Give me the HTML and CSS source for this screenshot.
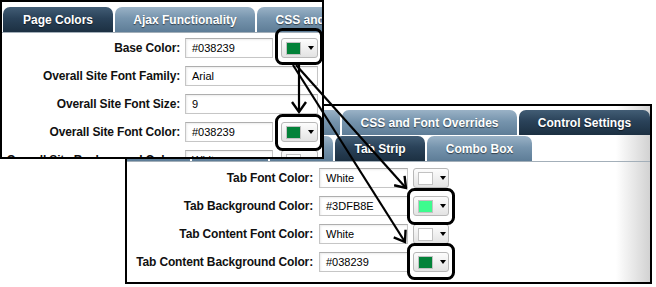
FILE: index.html
```html
<!DOCTYPE html>
<html lang="en">
<head>
  <meta charset="UTF-8">
  <meta name="viewport" content="width=device-width, initial-scale=1.0">
  <title>Tab Strip Colors</title>
  <link rel="stylesheet" href="styles.css">
</head>
<body>
  <div class="stage">

    <!-- back window: control settings -->
    <div class="shot shot-back">
      <div class="tabs">
        <div class="tab-row">
          <span class="tab tab-light tab-ajax2">Ajax Functionality</span>
          <span class="tab tab-light tab-css2">CSS and Font Overrides</span>
          <span class="tab tab-dark tab-control">Control Settings</span>
        </div>
        <div class="tab-row">
          <span class="tab tab-light tab-grid">Grid</span>
          <span class="tab tab-light tab-menu">Menu</span>
          <span class="tab tab-light tab-tree">Tree</span>
          <span class="tab tab-dark tab-strip">Tab Strip</span>
          <span class="tab tab-light tab-combo">Combo Box</span>
        </div>
      </div>

      <div class="form">
        <div class="row">
          <div class="label"><span>Tab Font Color:</span></div>
          <div class="field">
            <div class="input">White</div>
            <div class="picker"><span class="swatch swatch-white"></span><span class="caret"></span></div>
          </div>
        </div>
        <div class="row">
          <div class="label"><span>Tab Background Color:</span></div>
          <div class="field">
            <div class="input">#3DFB8E</div>
            <div class="picker"><span class="swatch swatch-mint"></span><span class="caret"></span></div>
          </div>
        </div>
        <div class="row">
          <div class="label"><span>Tab Content Font Color:</span></div>
          <div class="field">
            <div class="input">White</div>
            <div class="picker"><span class="swatch swatch-white"></span><span class="caret"></span></div>
          </div>
        </div>
        <div class="row">
          <div class="label"><span>Tab Content Background Color:</span></div>
          <div class="field">
            <div class="input">#038239</div>
            <div class="picker"><span class="swatch swatch-green"></span><span class="caret"></span></div>
          </div>
        </div>
      </div>
    </div>

    <!-- front window: page colors -->
    <div class="shot shot-front">
      <div class="tabs">
        <div class="tab-row">
          <span class="tab tab-dark tab-page">Page Colors</span>
          <span class="tab tab-light tab-ajax">Ajax Functionality</span>
          <span class="tab tab-light tab-css">CSS and Font Overrides</span>
        </div>
      </div>

      <div class="form">
        <div class="row">
          <div class="label"><span>Base Color:</span></div>
          <div class="field">
            <div class="input">#038239</div>
            <div class="picker"><span class="swatch swatch-green"></span><span class="caret"></span></div>
          </div>
        </div>
        <div class="row">
          <div class="label"><span>Overall Site Font Family:</span></div>
          <div class="field">
            <div class="input input-wide">Arial</div>
          </div>
        </div>
        <div class="row">
          <div class="label"><span>Overall Site Font Size:</span></div>
          <div class="field">
            <div class="input input-wide">9</div>
          </div>
        </div>
        <div class="row">
          <div class="label"><span>Overall Site Font Color:</span></div>
          <div class="field">
            <div class="input">#038239</div>
            <div class="picker"><span class="swatch swatch-green"></span><span class="caret"></span></div>
          </div>
        </div>
        <div class="row">
          <div class="label"><span>Overall Site Background Color:</span></div>
          <div class="field">
            <div class="input">White</div>
            <div class="picker"><span class="swatch swatch-white"></span><span class="caret"></span></div>
          </div>
        </div>
      </div>
    </div>

    <!-- callouts and arrows drawn over both windows -->
    <svg class="notes" width="656" height="287" viewBox="0 0 656 287">
      <defs>
        <marker id="head" markerWidth="14" markerHeight="16" refX="11" refY="8" orient="auto" markerUnits="userSpaceOnUse">
          <path d="M1,1 L11,8 L1,15" fill="none" stroke="#000" stroke-width="2.4"/>
        </marker>
      </defs>
      <g fill="none" stroke="#000" stroke-width="3">
        <rect x="276.5" y="29.5" width="45" height="34" rx="6"/>
        <rect x="276.5" y="115.5" width="45" height="34" rx="6"/>
        <rect x="408.5" y="189.5" width="45" height="34" rx="6"/>
        <rect x="408.5" y="244.5" width="45" height="34" rx="6"/>
      </g>
      <g stroke="#000" stroke-width="2.2" marker-end="url(#head)">
        <line x1="299" y1="65" x2="299" y2="112"/>
        <line x1="296" y1="65" x2="406" y2="188"/>
        <line x1="293" y1="65" x2="405" y2="242"/>
      </g>
    </svg>
  </div>
</body>
</html>
```

FILE: styles.css
```css
* {
  box-sizing: border-box;
}

body {
  margin: 0;
  background: #fff;
  font-family: "Liberation Sans", Arial, sans-serif;
}

.stage {
  position: relative;
  width: 656px;
  height: 287px;
  overflow: hidden;
}

/**
 * Screenshot windows
 */
.shot {
  position: absolute;
  border: 2px solid #000;
  background: #fff;
  overflow: hidden;
}

.shot-front {
  left: 0;
  top: 0;
  width: 324px;
  height: 159px;
  z-index: 2;

  --label: 178px;
  --gap: 5px;
  --input: 88px;
  --pick-gap: 8px;
  --pick: 37px;
}

.shot-back {
  left: 125px;
  top: 104px;
  width: 527px;
  height: 180px;
  z-index: 1;
  background: linear-gradient(to right, #fff calc(100% - 34px), #d2d2d2);

  --label: 186px;
  --gap: 6px;
  --input: 89px;
  --pick-gap: 5px;
  --pick: 36px;
}

/**
 * Tabs
 */
.tabs {
  padding: 4px 0 0 0;
  border-bottom: 1px solid #a3afb9;
}

.shot-front .tabs {
  padding: 5px 0 0 1px;
}

.tab-row {
  display: flex;
  gap: 2px;
  height: 25px;
}

.tab-row + .tab-row {
  margin-top: 1px;
}

.tab {
  flex: none;
  height: 25px;
  display: flex;
  align-items: center;
  justify-content: center;
  border-radius: 7px 7px 0 0;
  color: #fff;
  font-size: 12px;
  font-weight: bold;
  white-space: nowrap;
  overflow: hidden;
  text-shadow: 0 1px 1px rgba(0, 0, 0, 0.55);
}

.tab-dark {
  background: linear-gradient(#425d75, #2a4259 45%, #1c3042);
}

.tab-light {
  background: linear-gradient(#9ab2c6, #7694ad 45%, #5e7d97);
}

.tab-page { width: 110px; }
.tab-ajax { width: 140px; }
.tab-css { width: 175px; }

.tab-ajax2 { width: 213px; }
.tab-css2 { width: 175px; }
.tab-control { width: 131px; }

.tab-grid { width: 63px; }
.tab-menu { width: 76px; }
.tab-tree { width: 63px; }
.tab-strip { width: 90px; }
.tab-combo { width: 105px; }

/**
 * Form rows
 */
.form {
  padding-top: 1px;
}

.shot-back .form {
  padding-top: 2px;
}

.row {
  display: grid;
  grid-template-columns: var(--label) auto;
  column-gap: var(--gap);
  align-items: center;
  height: 28px;
}

.label {
  display: flex;
  justify-content: flex-end;
  white-space: nowrap;
  font-size: 12px;
  font-weight: bold;
  letter-spacing: -0.15px;
  color: #111;
}

.field {
  display: flex;
  align-items: center;
}

.input {
  width: var(--input);
  height: 20px;
  display: flex;
  align-items: center;
  padding: 0 6px;
  border: 1px solid #c6c6c6;
  border-top-color: #aeaeae;
  background: #fff;
  box-shadow: inset 1px 1px 2px rgba(0, 0, 0, 0.08);
  font-size: 11px;
  color: #000;
}

.input-wide {
  width: calc(var(--input) + var(--pick-gap) + var(--pick));
}

/* color picker button */
.picker {
  width: var(--pick);
  height: 20px;
  margin-left: var(--pick-gap);
  display: flex;
  align-items: center;
  padding-left: 4px;
  border: 1px solid #b8b8b8;
  border-radius: 3px;
  background: linear-gradient(#fdfdfd, #e3e3e3);
}

.swatch {
  width: 15px;
  height: 13px;
  border: 1px solid #c2c2c2;
}

.swatch-green { background: #038239; }
.swatch-mint { background: #3dfb8e; }
.swatch-white { background: #fff; }

.caret {
  margin-left: 7px;
  border-left: 3.5px solid transparent;
  border-right: 3.5px solid transparent;
  border-top: 4px solid #000;
}

/**
 * Callouts and arrows
 */
.notes {
  position: absolute;
  left: 0;
  top: 0;
  z-index: 3;
  pointer-events: none;
}
```
